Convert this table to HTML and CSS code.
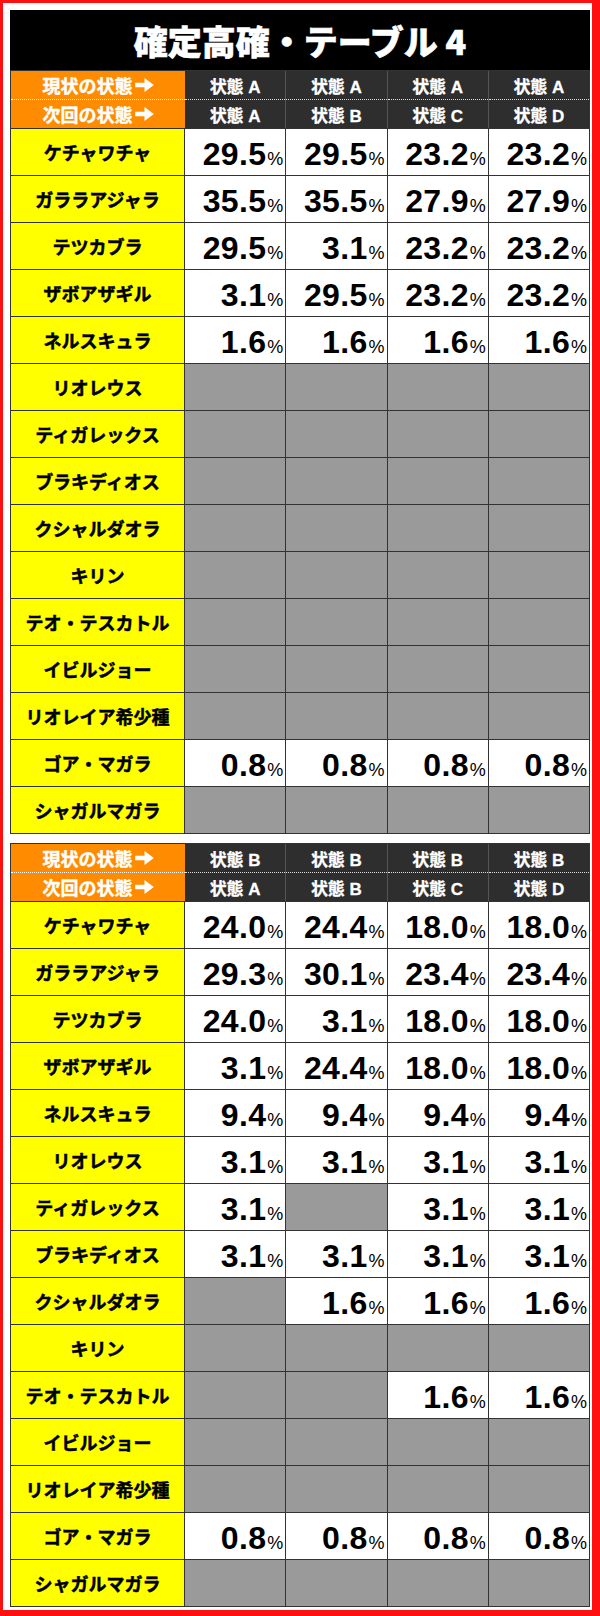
FILE: index.html
```html
<!DOCTYPE html>
<html lang="ja">
<head>
<meta charset="utf-8">
<link rel="stylesheet" href="styles.css">
</head>
<body>
<div class="frame">
  <div class="title">確定高確・テーブル 4</div>

  <div class="tbl">
    <div class="head">
      <div class="hl r1">現状の状態<svg class="arr" viewBox="0 0 16 12"><path d="M0 4h8V0l8 6-8 6V8H0z"/></svg></div>
      <div class="hs r1">状態 A</div><div class="hs r1">状態 A</div><div class="hs r1">状態 A</div><div class="hs r1">状態 A</div>
      <div class="hl">次回の状態<svg class="arr" viewBox="0 0 16 12"><path d="M0 4h8V0l8 6-8 6V8H0z"/></svg></div>
      <div class="hs">状態 A</div><div class="hs">状態 B</div><div class="hs">状態 C</div><div class="hs">状態 D</div>
    </div>
    <div class="body">
      <div class="lb">ケチャワチャ</div>
      <div class="v"><span class="n">29.5</span><span class="p">%</span></div>
      <div class="v"><span class="n">29.5</span><span class="p">%</span></div>
      <div class="v"><span class="n">23.2</span><span class="p">%</span></div>
      <div class="v"><span class="n">23.2</span><span class="p">%</span></div>

      <div class="lb">ガララアジャラ</div>
      <div class="v"><span class="n">35.5</span><span class="p">%</span></div>
      <div class="v"><span class="n">35.5</span><span class="p">%</span></div>
      <div class="v"><span class="n">27.9</span><span class="p">%</span></div>
      <div class="v"><span class="n">27.9</span><span class="p">%</span></div>

      <div class="lb">テツカブラ</div>
      <div class="v"><span class="n">29.5</span><span class="p">%</span></div>
      <div class="v"><span class="n">3.1</span><span class="p">%</span></div>
      <div class="v"><span class="n">23.2</span><span class="p">%</span></div>
      <div class="v"><span class="n">23.2</span><span class="p">%</span></div>

      <div class="lb">ザボアザギル</div>
      <div class="v"><span class="n">3.1</span><span class="p">%</span></div>
      <div class="v"><span class="n">29.5</span><span class="p">%</span></div>
      <div class="v"><span class="n">23.2</span><span class="p">%</span></div>
      <div class="v"><span class="n">23.2</span><span class="p">%</span></div>

      <div class="lb">ネルスキュラ</div>
      <div class="v"><span class="n">1.6</span><span class="p">%</span></div>
      <div class="v"><span class="n">1.6</span><span class="p">%</span></div>
      <div class="v"><span class="n">1.6</span><span class="p">%</span></div>
      <div class="v"><span class="n">1.6</span><span class="p">%</span></div>

      <div class="lb">リオレウス</div>
      <div class="g"></div><div class="g"></div><div class="g"></div><div class="g"></div>

      <div class="lb">ティガレックス</div>
      <div class="g"></div><div class="g"></div><div class="g"></div><div class="g"></div>

      <div class="lb">ブラキディオス</div>
      <div class="g"></div><div class="g"></div><div class="g"></div><div class="g"></div>

      <div class="lb">クシャルダオラ</div>
      <div class="g"></div><div class="g"></div><div class="g"></div><div class="g"></div>

      <div class="lb">キリン</div>
      <div class="g"></div><div class="g"></div><div class="g"></div><div class="g"></div>

      <div class="lb">テオ・テスカトル</div>
      <div class="g"></div><div class="g"></div><div class="g"></div><div class="g"></div>

      <div class="lb">イビルジョー</div>
      <div class="g"></div><div class="g"></div><div class="g"></div><div class="g"></div>

      <div class="lb">リオレイア希少種</div>
      <div class="g"></div><div class="g"></div><div class="g"></div><div class="g"></div>

      <div class="lb">ゴア・マガラ</div>
      <div class="v"><span class="n">0.8</span><span class="p">%</span></div>
      <div class="v"><span class="n">0.8</span><span class="p">%</span></div>
      <div class="v"><span class="n">0.8</span><span class="p">%</span></div>
      <div class="v"><span class="n">0.8</span><span class="p">%</span></div>

      <div class="lb">シャガルマガラ</div>
      <div class="g"></div><div class="g"></div><div class="g"></div><div class="g"></div>
    </div>
  </div>

  <div class="tbl second">
    <div class="head">
      <div class="hl r1">現状の状態<svg class="arr" viewBox="0 0 16 12"><path d="M0 4h8V0l8 6-8 6V8H0z"/></svg></div>
      <div class="hs r1">状態 B</div><div class="hs r1">状態 B</div><div class="hs r1">状態 B</div><div class="hs r1">状態 B</div>
      <div class="hl">次回の状態<svg class="arr" viewBox="0 0 16 12"><path d="M0 4h8V0l8 6-8 6V8H0z"/></svg></div>
      <div class="hs">状態 A</div><div class="hs">状態 B</div><div class="hs">状態 C</div><div class="hs">状態 D</div>
    </div>
    <div class="body">
      <div class="lb">ケチャワチャ</div>
      <div class="v"><span class="n">24.0</span><span class="p">%</span></div>
      <div class="v"><span class="n">24.4</span><span class="p">%</span></div>
      <div class="v"><span class="n">18.0</span><span class="p">%</span></div>
      <div class="v"><span class="n">18.0</span><span class="p">%</span></div>

      <div class="lb">ガララアジャラ</div>
      <div class="v"><span class="n">29.3</span><span class="p">%</span></div>
      <div class="v"><span class="n">30.1</span><span class="p">%</span></div>
      <div class="v"><span class="n">23.4</span><span class="p">%</span></div>
      <div class="v"><span class="n">23.4</span><span class="p">%</span></div>

      <div class="lb">テツカブラ</div>
      <div class="v"><span class="n">24.0</span><span class="p">%</span></div>
      <div class="v"><span class="n">3.1</span><span class="p">%</span></div>
      <div class="v"><span class="n">18.0</span><span class="p">%</span></div>
      <div class="v"><span class="n">18.0</span><span class="p">%</span></div>

      <div class="lb">ザボアザギル</div>
      <div class="v"><span class="n">3.1</span><span class="p">%</span></div>
      <div class="v"><span class="n">24.4</span><span class="p">%</span></div>
      <div class="v"><span class="n">18.0</span><span class="p">%</span></div>
      <div class="v"><span class="n">18.0</span><span class="p">%</span></div>

      <div class="lb">ネルスキュラ</div>
      <div class="v"><span class="n">9.4</span><span class="p">%</span></div>
      <div class="v"><span class="n">9.4</span><span class="p">%</span></div>
      <div class="v"><span class="n">9.4</span><span class="p">%</span></div>
      <div class="v"><span class="n">9.4</span><span class="p">%</span></div>

      <div class="lb">リオレウス</div>
      <div class="v"><span class="n">3.1</span><span class="p">%</span></div>
      <div class="v"><span class="n">3.1</span><span class="p">%</span></div>
      <div class="v"><span class="n">3.1</span><span class="p">%</span></div>
      <div class="v"><span class="n">3.1</span><span class="p">%</span></div>

      <div class="lb">ティガレックス</div>
      <div class="v"><span class="n">3.1</span><span class="p">%</span></div>
      <div class="g"></div>
      <div class="v"><span class="n">3.1</span><span class="p">%</span></div>
      <div class="v"><span class="n">3.1</span><span class="p">%</span></div>

      <div class="lb">ブラキディオス</div>
      <div class="v"><span class="n">3.1</span><span class="p">%</span></div>
      <div class="v"><span class="n">3.1</span><span class="p">%</span></div>
      <div class="v"><span class="n">3.1</span><span class="p">%</span></div>
      <div class="v"><span class="n">3.1</span><span class="p">%</span></div>

      <div class="lb">クシャルダオラ</div>
      <div class="g"></div>
      <div class="v"><span class="n">1.6</span><span class="p">%</span></div>
      <div class="v"><span class="n">1.6</span><span class="p">%</span></div>
      <div class="v"><span class="n">1.6</span><span class="p">%</span></div>

      <div class="lb">キリン</div>
      <div class="g"></div><div class="g"></div><div class="g"></div><div class="g"></div>

      <div class="lb">テオ・テスカトル</div>
      <div class="g"></div><div class="g"></div>
      <div class="v"><span class="n">1.6</span><span class="p">%</span></div>
      <div class="v"><span class="n">1.6</span><span class="p">%</span></div>

      <div class="lb">イビルジョー</div>
      <div class="g"></div><div class="g"></div><div class="g"></div><div class="g"></div>

      <div class="lb">リオレイア希少種</div>
      <div class="g"></div><div class="g"></div><div class="g"></div><div class="g"></div>

      <div class="lb">ゴア・マガラ</div>
      <div class="v"><span class="n">0.8</span><span class="p">%</span></div>
      <div class="v"><span class="n">0.8</span><span class="p">%</span></div>
      <div class="v"><span class="n">0.8</span><span class="p">%</span></div>
      <div class="v"><span class="n">0.8</span><span class="p">%</span></div>

      <div class="lb">シャガルマガラ</div>
      <div class="g"></div><div class="g"></div><div class="g"></div><div class="g"></div>
    </div>
  </div>
</div>
</body>
</html>
```

FILE: styles.css
```css
* { box-sizing: border-box; }
html, body { margin: 0; padding: 0; background: #fff; }
body { font-family: "Liberation Sans", "Noto Sans CJK JP", sans-serif; }

.frame {
  width: 600px;
  height: 1616px;
  border-style: solid;
  border-color: #ff1010;
  border-width: 3px 8px 6px 3px;
  padding: 7px 2px 0 7px;
  background: #fff;
}

.title {
  height: 60px;
  background: #000;
  color: #fff;
  font-family: "Noto Sans CJK JP", sans-serif;
  font-weight: 900;
  font-size: 34px;
  display: flex;
  align-items: center;
  justify-content: center;
  -webkit-text-stroke: 0.6px #fff;
}

.tbl {
  border: 1px solid #333;
  background: #333;
  display: flex;
  flex-direction: column;
  gap: 1px;
}
.tbl.second { margin-top: 9px; }

.head {
  display: grid;
  grid-template-columns: 173px repeat(4, 1fr);
  column-gap: 1px;
  background: #555;
}
.hl, .hs {
  height: 28px;
  display: flex;
  align-items: center;
  justify-content: center;
  color: #fff;
  font-weight: 700;
}
.hl.r1, .hs.r1 { height: 29px; border-bottom: 1px dotted #fff; }
.hl {
  background: #ff8c00;
  font-size: 18px;
  font-family: "Noto Sans CJK JP", sans-serif;
  -webkit-text-stroke: 0.4px #fff;
  margin-right: -1px;
}
.hs {
  background: #2e2e2e;
  font-size: 17px;
  font-family: "Liberation Sans", "Noto Sans CJK JP", sans-serif;
  -webkit-text-stroke: 0.3px #fff;
}
.hs.r1 { border-bottom-color: #ddd; }
.arr { width: 19px; height: 14px; fill: #fff; margin-left: 2px; }

.body {
  display: grid;
  grid-template-columns: 173px repeat(4, 1fr);
  grid-auto-rows: 46px;
  gap: 1px;
}
.lb {
  background: #ffff00;
  color: #000;
  font-family: "Noto Sans CJK JP", sans-serif;
  font-weight: 700;
  font-size: 18px;
  -webkit-text-stroke: 0.5px #000;
  display: flex;
  align-items: center;
  justify-content: center;
}
.v {
  background: #fff;
  display: flex;
  align-items: baseline;
  justify-content: flex-end;
  padding: 7px 2px 0 0;
  color: #000;
}
.n {
  font-family: "Liberation Sans", sans-serif;
  font-weight: 700;
  font-size: 32px;
  line-height: 36px;
  letter-spacing: 0.3px;
}
.p {
  font-family: "Liberation Sans", sans-serif;
  font-weight: 400;
  font-size: 18px;
  margin-left: 1px;
}
.g { background: #9a9a9a; }
```
